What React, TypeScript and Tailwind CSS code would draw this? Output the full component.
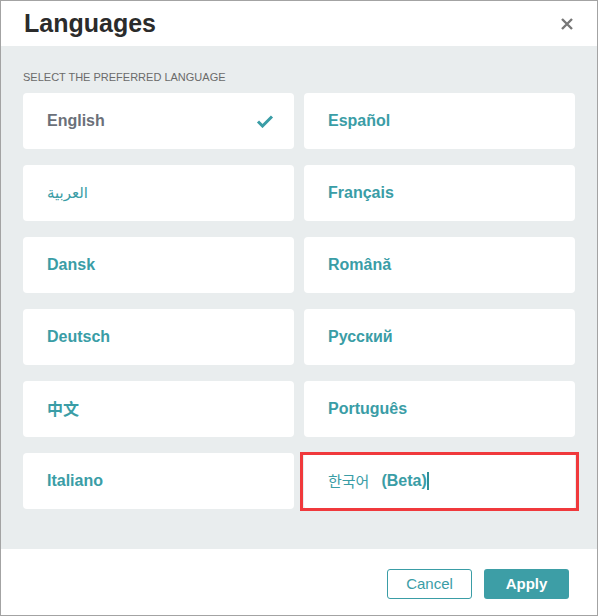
import React from 'react';

interface LangProps {
  label: string;
  selected?: boolean;
  highlight?: boolean;
  kind?: 'ar' | 'cjk' | 'ko';
}

const languages: LangProps[] = [
  { label: 'English', selected: true },
  { label: 'Español' },
  { label: 'العربية', kind: 'ar' },
  { label: 'Français' },
  { label: 'Dansk' },
  { label: 'Română' },
  { label: 'Deutsch' },
  { label: 'Русский' },
  { label: '中文', kind: 'cjk' },
  { label: 'Português' },
  { label: 'Italiano' },
  { label: '한국어', kind: 'ko', highlight: true },
];

const LangCard: React.FC<LangProps> = ({ label, selected, highlight, kind }) => {
  let text: React.ReactNode = label;
  if (kind === 'ar') {
    text = <span className="text-[15px] font-normal" style={{ fontFamily: '"DejaVu Sans", sans-serif' }}>{label}</span>;
  } else if (kind === 'cjk') {
    text = <span style={{ fontFamily: '"Noto Sans CJK SC", sans-serif' }}>{label}</span>;
  } else if (kind === 'ko') {
    text = (
      <span className="flex items-center">
        <span className="font-normal text-[15px]" style={{ fontFamily: '"Noto Sans CJK KR", sans-serif' }}>{label}</span>
        <span className="ml-[12px]">(Beta)</span>
        <span className="inline-block w-[2px] h-[18px] bg-[#2f8f97]"></span>
      </span>
    );
  }

  return (
    <div className="relative h-[56px] rounded-[4px] bg-white px-[24px] flex items-center justify-between">
      <span className={`text-[16px] font-bold ${selected ? 'text-[#6b7079]' : 'text-[#3a9da6]'}`}>{text}</span>
      {selected && (
        <svg width="18" height="14" viewBox="0 0 18 14" className="mr-[-4px]">
          <path d="M2 7.5 L6.5 12 L16 2.5" fill="none" stroke="#3a9da6" strokeWidth="3" />
        </svg>
      )}
      {highlight && (
        <div className="absolute left-[-4px] right-[-4px] top-[-1px] bottom-[-2px] border-[3px] border-[#f0393c] pointer-events-none"></div>
      )}
    </div>
  );
};

const App: React.FC = () => {
  return (
    <div
      className="w-[598px] h-[616px] border border-[#a3a3a3] bg-white flex flex-col"
      style={{ fontFamily: '"Liberation Sans", Arial, sans-serif' }}
    >
      <div className="h-[45px] flex items-center justify-between pl-[23px] pr-[24px]">
        <h1 className="text-[25px] font-bold text-[#2b2b2b] leading-none">Languages</h1>
        <svg width="12" height="12" viewBox="0 0 12 12">
          <path d="M1 1 L11 11 M11 1 L1 11" stroke="#777777" strokeWidth="2.4" />
        </svg>
      </div>

      <div className="bg-[#e9edee] px-[22px] pt-[25px] pb-[40px]">
        <p className="text-[11px] leading-[13px] text-[#6a6a6a] mb-[9px]">SELECT THE PREFERRED LANGUAGE</p>
        <div className="grid grid-cols-2 gap-x-[10px] gap-y-[16px]">
          {languages.map((lang, index) => (
            <LangCard key={index} {...lang} />
          ))}
        </div>
      </div>

      <div className="flex-1 flex justify-end items-start gap-[12px] pt-[20px] pr-[28px]">
        <button className="w-[85px] h-[30px] rounded-[3px] border border-[#3a9da6] text-[#3a9da6] text-[15px] bg-white">
          Cancel
        </button>
        <button className="w-[85px] h-[30px] rounded-[3px] bg-[#3d9ea6] text-white text-[15px] font-bold">
          Apply
        </button>
      </div>
    </div>
  );
};

export default App;
